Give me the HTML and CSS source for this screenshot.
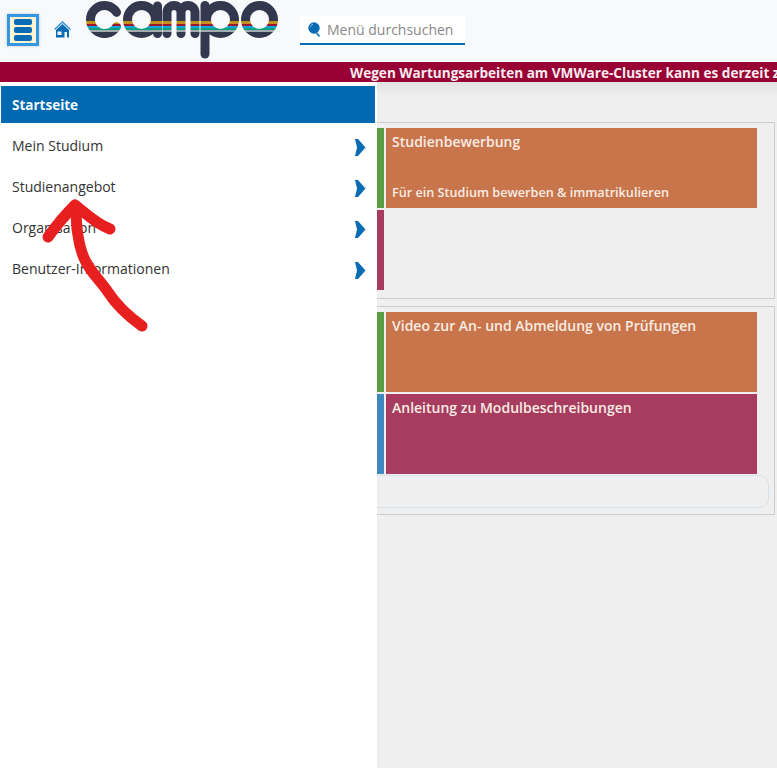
FILE: index.html
```html
<!DOCTYPE html>
<html lang="de">
<head>
<meta charset="utf-8">
<title>campo</title>
<link rel="stylesheet" href="styles.css">
</head>
<body>
<header class="topbar">
  <button class="menu-btn" aria-label="Menü"><span></span><span></span><span></span></button>
  <svg class="home" width="17" height="17" viewBox="0 0 17 17">
    <path d="M0.5 8.5 8.5 1 16.5 8.5" fill="none" stroke="#3d94d8" stroke-width="1.5"/>
    <path fill-rule="evenodd" fill="#0a6cb5" d="M8.5 3 15 9V16.5H13V11H10.500V16.500H2V9ZM3.500 10.500V14H7.500V10.500Z"/>
  </svg>
  <svg class="logo" width="196" height="62" viewBox="84 0 196 62">
    <defs>
      <mask id="logo-mask" maskUnits="userSpaceOnUse" x="84" y="0" width="196" height="62">
        <g class="logo-mask-strokes">
          <path d="M116.500 12.300A14 14 0 1 0 116.500 26.700"/>
          <circle cx="141.500" cy="19.500" r="14"/>
          <path d="M157.500 6V33.500"/>
          <path d="M167 33.500V12.500A7 7 0 0 1 181 12.500V33.500M181 12.500A7 7 0 0 1 195 12.500V33.500"/>
          <path d="M205 5.500V54"/>
          <circle cx="220.500" cy="19.500" r="14"/>
          <circle cx="259.500" cy="19.500" r="14"/>
        </g>
      </mask>
    </defs>
    <g mask="url(#logo-mask)">
      <rect x="84" y="0" width="196" height="62" fill="#33384f"/>
      <rect x="84" y="21" width="196" height="3" fill="#c3901c"/>
      <rect x="84" y="24" width="196" height="2" fill="#9c1733"/>
      <rect x="84" y="26" width="196" height="2" fill="#12a7d6"/>
      <rect x="84" y="28" width="196" height="2" fill="#0f9f7f"/>
      <rect x="84" y="30" width="196" height="2" fill="#a3aab0"/>
    </g>
  </svg>
  <div class="search">
    <svg width="13" height="15" viewBox="0 0 13 15">
      <circle cx="6" cy="6" r="5.700" fill="#0a6cb5"/>
      <path d="M8.500 11 11.500 14.500" stroke="#0a6cb5" stroke-width="1.600"/>
      <path d="M2.200 5A4 4 0 0 1 5 2.200" stroke="#8cc0e8" fill="none"/>
    </svg>
    <span>Menü durchsuchen</span>
  </div>
</header>
<div class="banner">Wegen Wartungsarbeiten am VMWare-Cluster kann es derzeit z</div>
<main class="content">
  <section class="panel panel-first">
    <div class="tiles">
      <div class="tile green"></div>
      <a class="tile orange">
        <strong>Studienbewerbung</strong>
        <small>Für ein Studium bewerben &amp; immatrikulieren</small>
      </a>
      <div class="tile maroon"></div>
    </div>
  </section>
  <section class="panel">
    <div class="tiles">
      <div class="tile green"></div>
      <a class="tile orange"><strong>Video zur An- und Abmeldung von Prüfungen</strong></a>
      <div class="tile blue"></div>
      <a class="tile maroon"><strong>Anleitung zu Modulbeschreibungen</strong></a>
    </div>
    <div class="rounded"></div>
  </section>
</main>
<nav class="sidebar">
  <div class="side-title">Startseite</div>
  <ul class="side-list">
    <li>Mein Studium<svg class="chev" width="11" height="17" viewBox="0 0 11 17"><path d="M0 0H3L10.500 8.500 3 17H0L2 8.500Z"/></svg></li>
    <li>Studienangebot<svg class="chev" width="11" height="17" viewBox="0 0 11 17"><path d="M0 0H3L10.500 8.500 3 17H0L2 8.500Z"/></svg></li>
    <li>Organisation<svg class="chev" width="11" height="17" viewBox="0 0 11 17"><path d="M0 0H3L10.500 8.500 3 17H0L2 8.500Z"/></svg></li>
    <li>Benutzer-Informationen<svg class="chev" width="11" height="17" viewBox="0 0 11 17"><path d="M0 0H3L10.500 8.500 3 17H0L2 8.500Z"/></svg></li>
  </ul>
</nav>
<svg class="scribble" width="160" height="160" viewBox="40 190 160 160">
  <path d="M142 326C128 316 117 306 108 292 100 280 90 272 84 258 78 244 76 222 76 206"/>
  <path d="M48 237C56 226 66 214 75 205 84 212 96 224 110 229"/>
</svg>
</body>
</html>
```
FILE: styles.css
```css
* { box-sizing: border-box; }
html, body { margin: 0; height: 100%; }
body {
  position: relative;
  height: 768px;
  overflow: hidden;
  font-family: "Open Sans", "Liberation Sans", sans-serif;
  background: #efefef;
  color: #333;
}
.topbar {
  display: flex;
  align-items: flex-start;
  height: 62px;
  background: #f8f9fb;
}
.menu-btn {
  display: flex;
  flex-direction: column;
  justify-content: center;
  gap: 2px;
  width: 32px;
  height: 32px;
  margin: 14px 0 0 7px;
  padding: 0 4px;
  background: #fdf3d2;
  border: 3px solid #3398e2;
  box-shadow: 0 0 3px rgba(0, 0, 0, .2);
}
.menu-btn span {
  display: block;
  height: 6px;
  border-radius: 2px;
  background: #0a6cb5;
}
.home { margin: 21px 0 0 15px; }
.logo { margin-left: 13px; }
.search {
  display: flex;
  align-items: center;
  gap: 6px;
  width: 165px;
  height: 29px;
  margin: 16px 0 0 20px;
  padding: 0 0 0 8px;
  background: #fff;
  border-bottom: 2px solid #0a6cb5;
  font-size: 14px;
  color: #888;
}
.banner {
  height: 20px;
  padding-left: 350px;
  overflow: hidden;
  white-space: nowrap;
  background: #990033;
  color: #f7ecef;
  font-size: 13.600px;
  font-weight: 700;
  line-height: 21px;
}
.content {
  padding-top: 40px;
  height: 686px;
  background: linear-gradient(#e2e2e2, #efefef 14px);
}
.panel {
  width: 475px;
  margin: 0 0 7px 300px;
  padding: 5px 5px 6px;
  border: 1px solid #cdcdcd;
}
.panel-first { padding-bottom: 8px; }
.tiles {
  display: grid;
  grid-template-columns: 78px 371px;
  grid-auto-rows: 80px;
  gap: 2px;
}
.tile {
  display: flex;
  flex-direction: column;
  justify-content: space-between;
  padding: 5px 6px 7px;
  color: #f8ece4;
}
.tile strong { font-size: 14px; font-weight: 600; line-height: 18px; }
.tile small { font-size: 12.650px; font-weight: 600; line-height: 18px; }
.green { background: #5b9e41; }
.orange { background: #c8754b; }
.maroon { background: #a83c60; }
.blue { background: #3f88bd; }
.tile.maroon:nth-child(3) { grid-column: 1; }
.rounded {
  height: 33px;
  margin-top: 1px;
  border: 1px solid #d6e2ec;
  border-radius: 10px;
}
.sidebar {
  position: absolute;
  left: 0;
  top: 82px;
  bottom: 0;
  width: 377px;
  padding: 4px 2px 0 1px;
  background: #fff;
}
.side-title {
  height: 37px;
  padding-left: 11px;
  background: #0069b0;
  color: #f5f9fc;
  font-size: 13.500px;
  font-weight: 700;
  line-height: 39px;
}
.side-list { list-style: none; margin: 0; padding: 2px 0 0; }
.side-list li {
  display: flex;
  align-items: center;
  justify-content: space-between;
  height: 41px;
  padding: 0 9px 0 11px;
  font-size: 14px;
  color: #333;
}
.chev { fill: #0a6cb5; margin-top: 4px; }
.scribble {
  position: absolute;
  left: 40px;
  top: 190px;
  fill: none;
  stroke: #e81f1f;
  stroke-width: 11px;
  stroke-linecap: round;
  stroke-linejoin: round;
}
.logo-mask-strokes {
  fill: none;
  stroke: #fff;
  stroke-width: 9px;
  stroke-linecap: round;
}
```
